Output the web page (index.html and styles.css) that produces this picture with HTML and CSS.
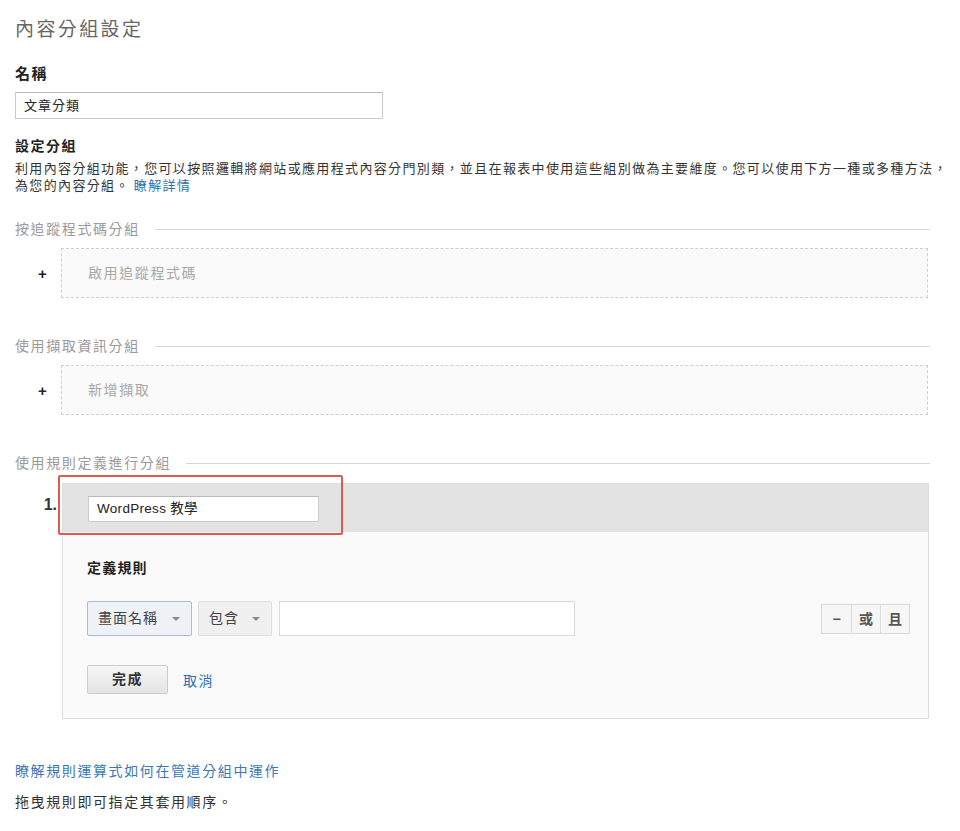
FILE: index.html
```html
<!DOCTYPE html>
<html lang="zh-Hant">
<head>
<meta charset="utf-8">
<title>內容分組設定</title>
<link rel="stylesheet" href="styles.css">
</head>
<body>
<div class="page">
  <h1 class="title">內容分組設定</h1>

  <div class="label">名稱</div>
  <div class="text-input name-input">文章分類</div>

  <div class="label label-group">設定分組</div>
  <p class="desc">利用內容分組功能，您可以按照邏輯將網站或應用程式內容分門別類，並且在報表中使用這些組別做為主要維度。您可以使用下方一種或多種方法，為您的內容分組。<a class="link desc-link" href="#">瞭解詳情</a></p>

  <div class="section-head first"><span>按追蹤程式碼分組</span><i class="rule-line"></i></div>
  <div class="add-row">
    <span class="plus">+</span>
    <div class="dash-box">啟用追蹤程式碼</div>
  </div>

  <div class="section-head"><span>使用擷取資訊分組</span><i class="rule-line"></i></div>
  <div class="add-row">
    <span class="plus">+</span>
    <div class="dash-box">新增擷取</div>
  </div>

  <div class="section-head"><span>使用規則定義進行分組</span><i class="rule-line"></i></div>
  <div class="rule-item">
    <span class="rule-num">1.</span>
    <div class="rule-card">
      <div class="rule-band">
        <div class="text-input rule-name">WordPress 教學</div>
      </div>
      <div class="rule-body">
        <div class="rule-title">定義規則</div>
        <div class="cond-row">
          <div class="select select-focus">畫面名稱<span class="caret"></span></div>
          <div class="select select-op">包含<span class="caret"></span></div>
          <div class="cond-value"></div>
          <div class="bool-group">
            <span class="bool-btn">−</span><span class="bool-btn">或</span><span class="bool-btn">且</span>
          </div>
        </div>
        <div class="action-row">
          <span class="btn-done">完成</span>
          <a class="link cancel" href="#">取消</a>
        </div>
      </div>
    </div>
    <div class="highlight"></div>
  </div>

  <a class="link footer-link" href="#">瞭解規則運算式如何在管道分組中運作</a>
  <p class="note">拖曳規則即可指定其套用順序。</p>
</div>
</body>
</html>
```

FILE: styles.css
```css
* { box-sizing: border-box; }

html, body {
  margin: 0;
  padding: 0;
  background: #ffffff;
}

body {
  font-family: "Liberation Sans", "Noto Sans CJK TC", sans-serif;
  color: #333333;
  font-size: 14px;
  letter-spacing: 1.5px;
}

.page {
  width: 915px;
  padding: 18px 0 0 15px;
  box-sizing: content-box;
}

.title {
  margin: 0;
  font-size: 19px;
  line-height: 24px;
  font-weight: normal;
  letter-spacing: 2.4px;
  color: #666666;
}

.label {
  margin-top: 22px;
  font-size: 15px;
  line-height: 20px;
  font-weight: bold;
  color: #222222;
  letter-spacing: 1.5px;
}

.label-group {
  margin-top: 17px;
  font-size: 14px;
}

.text-input {
  background: #ffffff;
  border: 1px solid #cccccc;
  border-top-color: #b9b9b9;
  color: #222222;
}

.name-input {
  margin-top: 8px;
  width: 368px;
  height: 27px;
  padding: 0 0 0 8px;
  font-size: 13px;
  line-height: 25px;
  letter-spacing: 1px;
}

.desc {
  margin: 4px 0 0 0;
  width: 940px;
  font-size: 13px;
  line-height: 17px;
  letter-spacing: 1.35px;
  color: #333333;
}

.link {
  color: #2f6eb0;
  text-decoration: none;
}

.desc-link {
  margin-left: 4px;
}

.section-head {
  margin-top: 38px;
  display: flex;
  align-items: center;
  gap: 15px;
  font-size: 14px;
  line-height: 20px;
  letter-spacing: 1.6px;
  color: #9a9a9a;
}

.section-head.first {
  margin-top: 25px;
}

.rule-line {
  flex: 1;
  height: 0;
  border-top: 1px solid #d6d6d6;
}

.add-row {
  margin-top: 9px;
  display: flex;
  align-items: center;
}

.plus {
  width: 46px;
  padding-left: 23px;
  font-size: 15px;
  font-weight: bold;
  color: #222222;
}

.dash-box {
  width: 867px;
  height: 50px;
  border: 1px dashed #cfcfcf;
  background: #fafafa;
  padding-left: 26px;
  line-height: 48px;
  font-size: 14px;
  letter-spacing: 1.6px;
  color: #a8a8a8;
}

.rule-item {
  position: relative;
  margin-top: 10px;
  display: flex;
  align-items: flex-start;
}

.rule-num {
  width: 47px;
  padding: 12px 5px 0 0;
  text-align: right;
  font-size: 16px;
  line-height: 20px;
  font-weight: bold;
  color: #333333;
  letter-spacing: 0;
}

.rule-card {
  width: 867px;
  border: 1px solid #dcdcdc;
  background: #fafafa;
}

.rule-band {
  height: 48px;
  background: #e3e3e3;
  padding: 12px 0 0 25px;
}

.rule-name {
  width: 231px;
  height: 26px;
  padding-left: 8px;
  font-size: 13.5px;
  line-height: 24px;
  letter-spacing: 0.3px;
}

.rule-body {
  padding: 26px 18px 24px 24px;
}

.rule-title {
  font-size: 14px;
  line-height: 20px;
  font-weight: bold;
  color: #222222;
  letter-spacing: 1.2px;
}

.cond-row {
  margin-top: 23px;
  display: flex;
  align-items: center;
}

.select {
  position: relative;
  height: 35px;
  line-height: 33px;
  padding-left: 10px;
  font-size: 14px;
  letter-spacing: 1px;
  color: #444444;
  border: 1px solid #dedede;
  border-radius: 2px;
  background: #f0f0f0;
}

.select-focus {
  width: 105px;
  border-color: #a9bcd6;
  background: #eef1f5;
}

.select-op {
  width: 74px;
  margin-left: 6px;
}

.caret {
  position: absolute;
  right: 11px;
  top: 15px;
  width: 0;
  height: 0;
  border-left: 4px solid transparent;
  border-right: 4px solid transparent;
  border-top: 4px solid #8a8a8a;
}

.cond-value {
  width: 296px;
  height: 35px;
  margin-left: 7px;
  background: #ffffff;
  border: 1px solid #dadada;
}

.bool-group {
  margin-left: auto;
  display: flex;
  border: 1px solid #dadada;
  background: #f6f6f6;
}

.bool-btn {
  width: 29px;
  height: 28px;
  line-height: 28px;
  text-align: center;
  font-size: 14px;
  font-weight: bold;
  letter-spacing: 0;
  color: #555555;
}

.bool-btn + .bool-btn {
  border-left: 1px solid #dedede;
}

.action-row {
  margin-top: 29px;
  display: flex;
  align-items: center;
  gap: 15px;
}

.btn-done {
  width: 81px;
  height: 29px;
  line-height: 27px;
  text-align: center;
  font-size: 14px;
  font-weight: bold;
  color: #333333;
  letter-spacing: 1.5px;
  border: 1px solid #cccccc;
  border-radius: 2px;
  background: linear-gradient(#f6f6f6, #e4e4e4);
}

.cancel {
  font-size: 14px;
  letter-spacing: 1.5px;
}

.highlight {
  position: absolute;
  left: 43px;
  top: -8px;
  width: 285px;
  height: 60px;
  border: 2px solid #de5b4f;
  border-radius: 2px;
  pointer-events: none;
}

.footer-link {
  display: block;
  margin-top: 42px;
  font-size: 14px;
  line-height: 20px;
  letter-spacing: 1.6px;
  color: #3a78b6;
}

.note {
  margin: 11px 0 0 0;
  font-size: 14px;
  line-height: 20px;
  letter-spacing: 1.6px;
  color: #333333;
}
```
